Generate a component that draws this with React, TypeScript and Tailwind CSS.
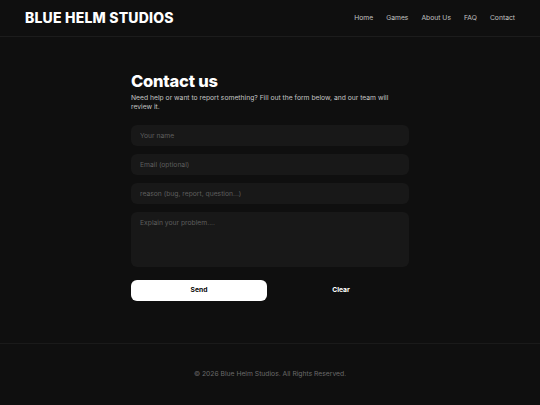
import React from "react";

export default function App() {
  const font = { fontFamily: "Inter, 'Noto Sans', sans-serif" };
  const field =
    "h-[21px] rounded-[6px] bg-[#181818] px-[9px] text-[6.75px] text-white placeholder:text-[#5e5e5e] outline-none";
  return (
    <div className="min-h-screen flex flex-col bg-[#0f0f0f] text-white" style={font}>
      <header className="h-[37px] shrink-0 flex items-center justify-between px-[25px] border-b border-[#1c1c1c]">
        <div className="text-[14px] font-extrabold tracking-[0.2px] leading-none">BLUE HELM STUDIOS</div>
        <nav className="flex items-center gap-[13px] text-[6.75px] text-[#c2c2c2]">
          <span>Home</span>
          <span>Games</span>
          <span>About Us</span>
          <span>FAQ</span>
          <span>Contact</span>
        </nav>
      </header>
      <main className="flex-1 flex justify-center pt-[33px]">
        <div className="w-[278px] flex flex-col">
          <h1 className="text-[16.5px] leading-[21px] font-extrabold tracking-[-0.2px] pt-[1px]">Contact us</h1>
          <p className="mt-[1px] text-[6.75px] leading-[9px] text-[#c4c4c4]">
            Need help or want to report something? Fill out the form below, and our team will review it.
          </p>
          <form className="mt-[14px] flex flex-col gap-[8px]" onSubmit={(e) => e.preventDefault()}>
            <input placeholder="Your name" className={field} />
            <input placeholder="Email (optional)" className={field} />
            <input placeholder="reason (bug, report, question...)" className={field} />
            <textarea
              placeholder="Explain your problem...."
              className="h-[55px] resize-none rounded-[6px] bg-[#181818] px-[9px] py-[6px] text-[6.75px] leading-[9px] text-white placeholder:text-[#5e5e5e] outline-none"
            />
            <div className="mt-[5px] grid grid-cols-2 gap-[6px]">
              <button type="submit" className="h-[21px] rounded-[6px] bg-white text-black text-[6.75px] font-bold">
                Send
              </button>
              <button type="button" className="h-[21px] rounded-[6px] text-white text-[6.75px] font-bold">
                Clear
              </button>
            </div>
          </form>
        </div>
      </main>
      <footer className="h-[62px] shrink-0 border-t border-[#1a1a1a] flex items-center justify-center text-[6.75px] text-[#6a6a6a]">
        © 2026 Blue Helm Studios. All Rights Reserved.
      </footer>
    </div>
  );
}
